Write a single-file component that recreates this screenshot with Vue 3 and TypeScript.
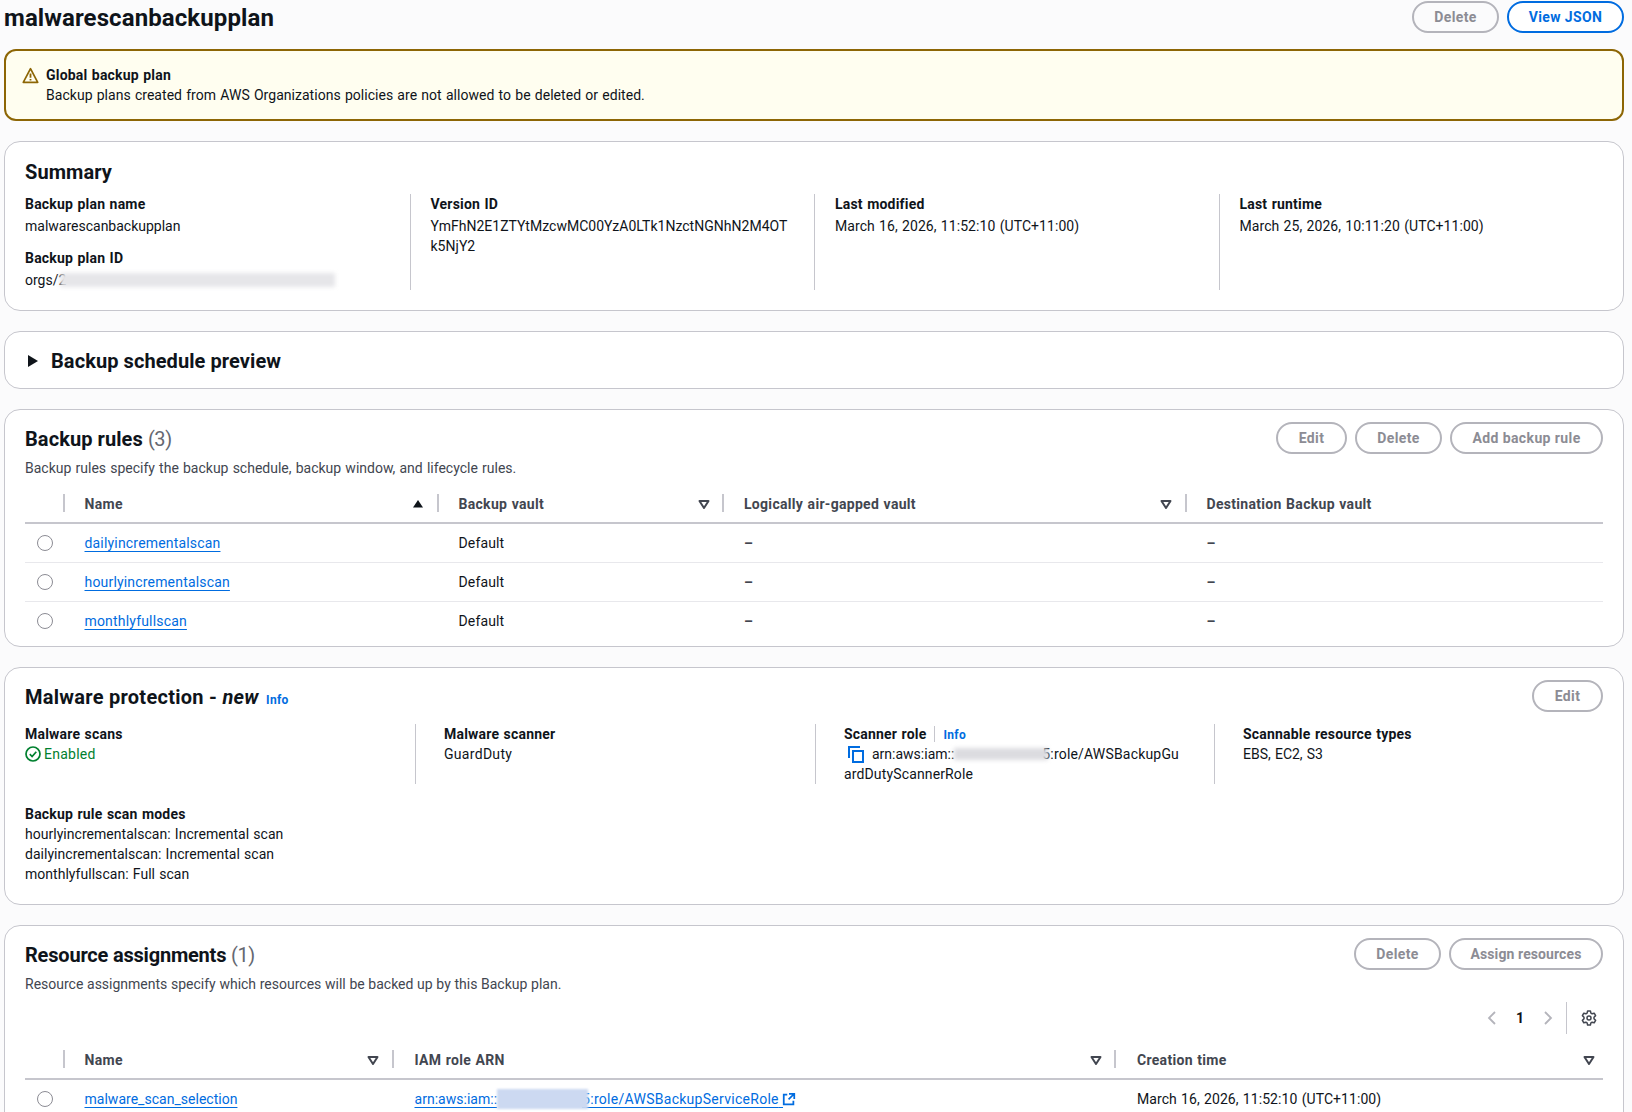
<script setup lang="ts">
interface Rule { name: string }
const rules: Rule[] = [
  { name: 'dailyincrementalscan' },
  { name: 'hourlyincrementalscan' },
  { name: 'monthlyfullscan' },
]
</script>

<template>
  <div class="page">
    <div class="top">
      <h1 class="title">malwarescanbackupplan</h1>
      <div class="btns">
        <button class="btn off w87">Delete</button>
        <button class="btn on">View JSON</button>
      </div>
    </div>

    <div class="alert">
      <svg class="alert-icon" viewBox="0 0 16 16" fill="none" stroke="#8d6605" stroke-width="1.6" stroke-linejoin="round">
        <path d="M8 1.6 14.8 14.4H1.2z" />
        <path d="M8 6v4.2M8 11.4v1.2" stroke-width="1.7" />
      </svg>
      <div class="alert-text">
        <div class="bold">Global backup plan</div>
        <div>Backup plans created from AWS Organizations policies are not allowed to be deleted or edited.</div>
      </div>
    </div>

    <section class="card summary">
      <h2 class="h2">Summary</h2>
      <div class="cols4 s-cols">
        <div class="col">
          <div class="bold">Backup plan name</div>
          <div class="val">malwarescanbackupplan</div>
          <div class="bold lab2">Backup plan ID</div>
          <div class="val redact-host">orgs/2<span class="blur blur-id"></span></div>
        </div>
        <div class="col">
          <div class="bold">Version ID</div>
          <div class="val ver">YmFhN2E1ZTYtMzcwMC00YzA0LTk1NzctNGNhN2M4OT<br />k5NjY2</div>
        </div>
        <div class="col">
          <div class="bold">Last modified</div>
          <div class="val date">March 16, 2026, 11:52:10 (UTC+11:00)</div>
        </div>
        <div class="col">
          <div class="bold">Last runtime</div>
          <div class="val date">March 25, 2026, 10:11:20 (UTC+11:00)</div>
        </div>
      </div>
    </section>

    <section class="card schedule">
      <svg class="caret" viewBox="0 0 12 14"><path d="M1 1v12l10-6z" fill="#0f141a" /></svg>
      <h2 class="h2">Backup schedule preview</h2>
    </section>

    <section class="card rules">
      <div class="head">
        <div>
          <h2 class="h2 ht">Backup rules <span class="count">(3)</span></h2>
        </div>
        <div class="btns">
          <button class="btn off w71">Edit</button>
          <button class="btn off w87">Delete</button>
          <button class="btn off w153">Add backup rule</button>
        </div>
      </div>
      <div class="desc">Backup rules specify the backup schedule, backup window, and lifecycle rules.</div>
      <div class="thead r-grid">
        <div class="th"></div>
        <div class="th sep">Name
          <svg class="sort" viewBox="0 0 16 16"><path d="M8 4 13 11.5H3z" fill="#0f141a" /></svg>
        </div>
        <div class="th sep">Backup vault
          <svg class="sort" viewBox="0 0 16 16" fill="none" stroke="#424650" stroke-width="2" stroke-linejoin="round"><path d="M12.5 5h-9L8 12z" /></svg>
        </div>
        <div class="th sep">Logically air-gapped vault
          <svg class="sort" viewBox="0 0 16 16" fill="none" stroke="#424650" stroke-width="2" stroke-linejoin="round"><path d="M12.5 5h-9L8 12z" /></svg>
        </div>
        <div class="th sep">Destination Backup vault</div>
      </div>
      <div v-for="r in rules" :key="r.name" class="tr r-grid">
        <div class="td radio-cell"><span class="radio"></span></div>
        <div class="td pl"><a class="link rule-link">{{ r.name }}</a></div>
        <div class="td pl">Default</div>
        <div class="td pl dash">–</div>
        <div class="td pl dash">–</div>
      </div>
    </section>

    <section class="card malware">
      <div class="head">
        <h2 class="h2 ht wide">Malware protection - <em>new</em> <a class="info big-info">Info</a></h2>
        <div class="btns"><button class="btn off w71">Edit</button></div>
      </div>
      <div class="cols4 m-cols">
        <div class="col">
          <div class="bold">Malware scans</div>
          <div class="ok">
            <svg class="ok-icon" viewBox="0 0 16 16" fill="none" stroke="#00802f" stroke-width="1.7">
              <circle cx="8" cy="8" r="7" />
              <path d="m4.8 8.2 2.3 2.3 4.2-4.8" />
            </svg>Enabled
          </div>
        </div>
        <div class="col">
          <div class="bold">Malware scanner</div>
          <div class="loose">GuardDuty</div>
        </div>
        <div class="col">
          <div class="bold">Scanner role<span class="vbar"></span><a class="info">Info</a></div>
          <div class="arn">
            <svg class="copy" viewBox="0 0 18 18" fill="none" stroke="#006ce0" stroke-width="2">
              <path d="M2 13V2h11" />
              <path d="M6 6h10v11H6z" />
            </svg>arn:aws:iam::<span class="blur blur-acct"></span><span class="over">5:role/AWSBackupGu</span><br /><span class="loose-sm">ardDutyScannerRole</span>
          </div>
        </div>
        <div class="col">
          <div class="bold">Scannable resource types</div>
          <div>EBS, EC2, S3</div>
        </div>
      </div>
      <div class="bold modes">Backup rule scan modes</div>
      <div class="scan">hourlyincrementalscan: Incremental scan</div>
      <div class="scan">dailyincrementalscan: Incremental scan</div>
      <div class="scan">monthlyfullscan: Full scan</div>
    </section>

    <section class="card resources">
      <div class="head">
        <h2 class="h2 ht tight">Resource assignments <span class="count">(1)</span></h2>
        <div class="btns">
          <button class="btn off w87">Delete</button>
          <button class="btn off w154">Assign resources</button>
        </div>
      </div>
      <div class="desc d2">Resource assignments specify which resources will be backed up by this Backup plan.</div>
      <div class="pager">
        <svg class="chev" viewBox="0 0 16 16" fill="none" stroke="#b4b4bb" stroke-width="1.8"><path d="m11 2-6 6 6 6" /></svg>
        <span class="pg">1</span>
        <svg class="chev" viewBox="0 0 16 16" fill="none" stroke="#b4b4bb" stroke-width="1.8"><path d="m5 2 6 6-6 6" /></svg>
        <span class="pager-bar"></span>
        <svg class="gear" viewBox="0 0 16 16" fill="none" stroke="#424650" stroke-width="1.5" stroke-linejoin="round">
          <path d="M6.6 1h2.8l.5 2.1 1.2.7 2.1-.6 1.4 2.4L13 7.2v1.6l1.6 1.6-1.4 2.4-2.1-.6-1.2.7L9.4 15H6.6l-.5-2.1-1.2-.7-2.1.6-1.4-2.4L3 8.8V7.2L1.4 5.6l1.4-2.4 2.1.6 1.2-.7z" />
          <circle cx="8" cy="8" r="2" />
        </svg>
      </div>
      <div class="thead a-grid">
        <div class="th"></div>
        <div class="th sep">Name
          <svg class="sort" viewBox="0 0 16 16" fill="none" stroke="#424650" stroke-width="2" stroke-linejoin="round"><path d="M12.5 5h-9L8 12z" /></svg>
        </div>
        <div class="th sep">IAM role ARN
          <svg class="sort" viewBox="0 0 16 16" fill="none" stroke="#424650" stroke-width="2" stroke-linejoin="round"><path d="M12.5 5h-9L8 12z" /></svg>
        </div>
        <div class="th sep last">Creation time
          <svg class="sort" viewBox="0 0 16 16" fill="none" stroke="#424650" stroke-width="2" stroke-linejoin="round"><path d="M12.5 5h-9L8 12z" /></svg>
        </div>
      </div>
      <div class="tr a-grid">
        <div class="td radio-cell"><span class="radio"></span></div>
        <div class="td pl"><a class="link">malware_scan_selection</a></div>
        <div class="td pl">
          <a class="link">arn:aws:iam::<span class="blur blur-link"></span><span class="over link-over">5:role/AWSBackupServiceRole</span>&nbsp;</a><svg class="ext" viewBox="0 0 16 16" fill="none" stroke="#006ce0" stroke-width="2">
            <path d="M14 8V2H8M14 2 7.5 8.5M6 3H2v11h11v-4" />
          </svg>
        </div>
        <div class="td pl date">March 16, 2026, 11:52:10 (UTC+11:00)</div>
      </div>
    </section>
  </div>
</template>

<style>
html, body { margin: 0; height: 1112px; overflow: hidden; background: #fbfbfc; }
</style>

<style scoped>
.page {
  width: 1620px;
  height: 1112px;
  margin-left: 4px;
  padding-top: 1px;
  box-sizing: border-box;
  overflow: hidden;
  font: 14px/20px Roboto, sans-serif;
  word-spacing: 0.7px;
  color: #0f141a;
}
.top { display: flex; justify-content: space-between; height: 32px; }
.title { margin: 0; padding-top: 1px; font-size: 24px; line-height: 32px; font-weight: 700; letter-spacing: 0.1px; word-spacing: 0; }
.btns { display: flex; gap: 8px; }
.btn {
  height: 32px;
  box-sizing: border-box;
  padding: 0;
  border-radius: 16px;
  border: 2px solid #b4b4bb;
  background: transparent;
  font: 700 14px/20px Roboto, sans-serif;
  letter-spacing: 0.4px;
  color: #8c8c94;
}
.btn.on { border-color: #006ce0; color: #006ce0; background: #fff; width: 117px; }
.w71 { width: 71px; }
.w87 { width: 87px; }
.w153 { width: 153px; }
.w154 { width: 154px; letter-spacing: 0.1px; }
.alert {
  margin-top: 16px;
  height: 72px;
  box-sizing: border-box;
  padding: 14px 16px;
  border: 2px solid #8d6605;
  border-radius: 12px;
  background: #fffef0;
  display: flex;
  gap: 7px;
}
.alert-text { letter-spacing: 0.03px; }
.alert-icon { width: 17px; height: 17px; margin-top: 2px; }
.bold { font-weight: 700; letter-spacing: 0.2px; }
.card {
  margin-top: 20px;
  border: 1px solid #c6c6cd;
  border-radius: 16px;
  background: #fff;
  box-sizing: border-box;
}
.h2 { margin: 0; font-size: 20px; line-height: 24px; font-weight: 700; word-spacing: 0; letter-spacing: 0.08px; }
.wide { letter-spacing: 0.27px; }
.tight { letter-spacing: -0.2px; }
.summary { height: 170px; padding: 18px 20px 0; }
.cols4 { display: grid; margin-right: -20px; }
.s-cols { grid-template-columns: 384.5px 1fr 1fr 1fr; margin-top: 10px; height: 96px; }
.m-cols { grid-template-columns: 389.5px 400px 399px 1fr; margin-top: 12px; height: 60px; }
.s-cols .col + .col { border-left: 1px solid #c6c6cd; padding-left: 20px; padding-right: 20px; }
.m-cols .col + .col { border-left: 1px solid #c6c6cd; padding-left: 28.5px; padding-right: 28px; }
.col { min-width: 0; }
.val { margin-top: 2px; }
.date { letter-spacing: 0.07px; }
.loose { letter-spacing: 0.3px; }
.loose-sm { letter-spacing: 0.14px; }
.scan { letter-spacing: 0.03px; }
.ver { white-space: nowrap; letter-spacing: 0.02px; }
.lab2 { margin-top: 12px; }
.redact-host { position: relative; }
.blur { display: inline-block; background: #d9d9dd; filter: blur(2px); position: relative; z-index: 1; }
.blur-id { position: absolute; left: 35px; top: 3px; width: 275px; height: 14px; background: #e6e6e9; }
.schedule { height: 58px; display: flex; align-items: center; padding: 2px 0 0 22px; gap: 12px; }
.caret { width: 12px; height: 14px; }
.rules { height: 238px; padding: 12px 20px 0; }
.head { display: flex; justify-content: space-between; height: 32px; }
.ht { padding-top: 5px; }
.count { font-weight: 400; color: #656871; letter-spacing: -0.4px; }
.desc { margin-top: 4px; color: #424650; }
.d2 { word-spacing: 0.2px; }
.r-grid { grid-template-columns: 39px 374px 285.5px 462.5px 1fr; }
.a-grid { grid-template-columns: 39px 329px 722.5px 1fr; }
.thead {
  display: grid;
  margin-top: 8px;
  height: 36px;
  border-bottom: 2px solid #c6c6cd;
  color: #424650;
  font-weight: 700;
  letter-spacing: 0.3px;
  align-items: center;
}
.th { position: relative; padding-left: 20.5px; height: 20px; }
.a-grid .th { padding-left: 21.5px; }
.a-grid .th:nth-child(2) { padding-left: 20.5px; }
.th.sep::before {
  content: "";
  position: absolute;
  left: -1.5px;
  top: 0;
  width: 2px;
  height: 18px;
  background: #c6c6cd;
}
.sort { position: absolute; right: 12px; top: 2px; width: 16px; height: 16px; }
.last .sort { right: 6px; }
.tr {
  display: grid;
  height: 39px;
  box-sizing: border-box;
  align-items: center;
  border-bottom: 1px solid #e8e8ec;
  letter-spacing: 0.15px;
}
.rules .tr:last-child { border-bottom-color: transparent; }
.td { min-width: 0; white-space: nowrap; }
.pl { padding-left: 20.5px; }
.a-grid .pl { padding-left: 21.5px; }
.a-grid .pl:nth-child(2) { padding-left: 20.5px; }
.dash { font-weight: 700; color: #424650; }
.radio-cell { padding-left: 12px; display: flex; }
.radio { width: 16px; height: 16px; box-sizing: border-box; border: 1px solid #8c8c94; border-radius: 50%; }
.link { color: #006ce0; text-decoration: underline; text-underline-offset: 3px; letter-spacing: 0.02px; }
.rule-link { letter-spacing: 0.18px; }
.malware { height: 238px; padding: 12px 20px 0; }
.info { color: #006ce0; font-size: 12px; font-weight: 700; letter-spacing: 0.3px; }
.big-info { margin-left: 2px; font-style: normal; }
.ok { color: #00802f; display: flex; align-items: center; gap: 3px; letter-spacing: 0.25px; }
.ok-icon { width: 16px; height: 16px; }
.vbar { display: inline-block; width: 1px; height: 16px; background: #c6c6cd; margin: 0 8px; vertical-align: -3px; }
.arn { white-space: nowrap; position: relative; margin-top: -1px; }
.copy { width: 18px; height: 18px; vertical-align: top; margin: 1px 7px 0 3px; }
.blur-acct { width: 94px; height: 12px; vertical-align: -1px; background: #dcdce0; }
.over { position: relative; margin-left: -6px; letter-spacing: 0.18px; }
.link-over { letter-spacing: 0.28px; }
.modes { margin-top: 20px; }
.resources { height: 300px; padding: 12px 20px 0; }
.pager { display: flex; align-items: center; justify-content: flex-end; height: 32px; margin-top: 8px; padding-right: 6px; }
.chev { width: 16px; height: 16px; }
.pg { width: 40px; text-align: center; font-weight: 700; }
.pager-bar { width: 1px; height: 32px; background: #c6c6cd; margin: 0 14px 0 10px; }
.gear { width: 16px; height: 16px; }
.resources .thead { margin-top: 8px; }
.blur-link { width: 91px; height: 20px; vertical-align: -5px; background: #ccd9f1; filter: blur(1px); }
.ext { width: 14px; height: 14px; vertical-align: -2px; margin-left: -1px; }
</style>
